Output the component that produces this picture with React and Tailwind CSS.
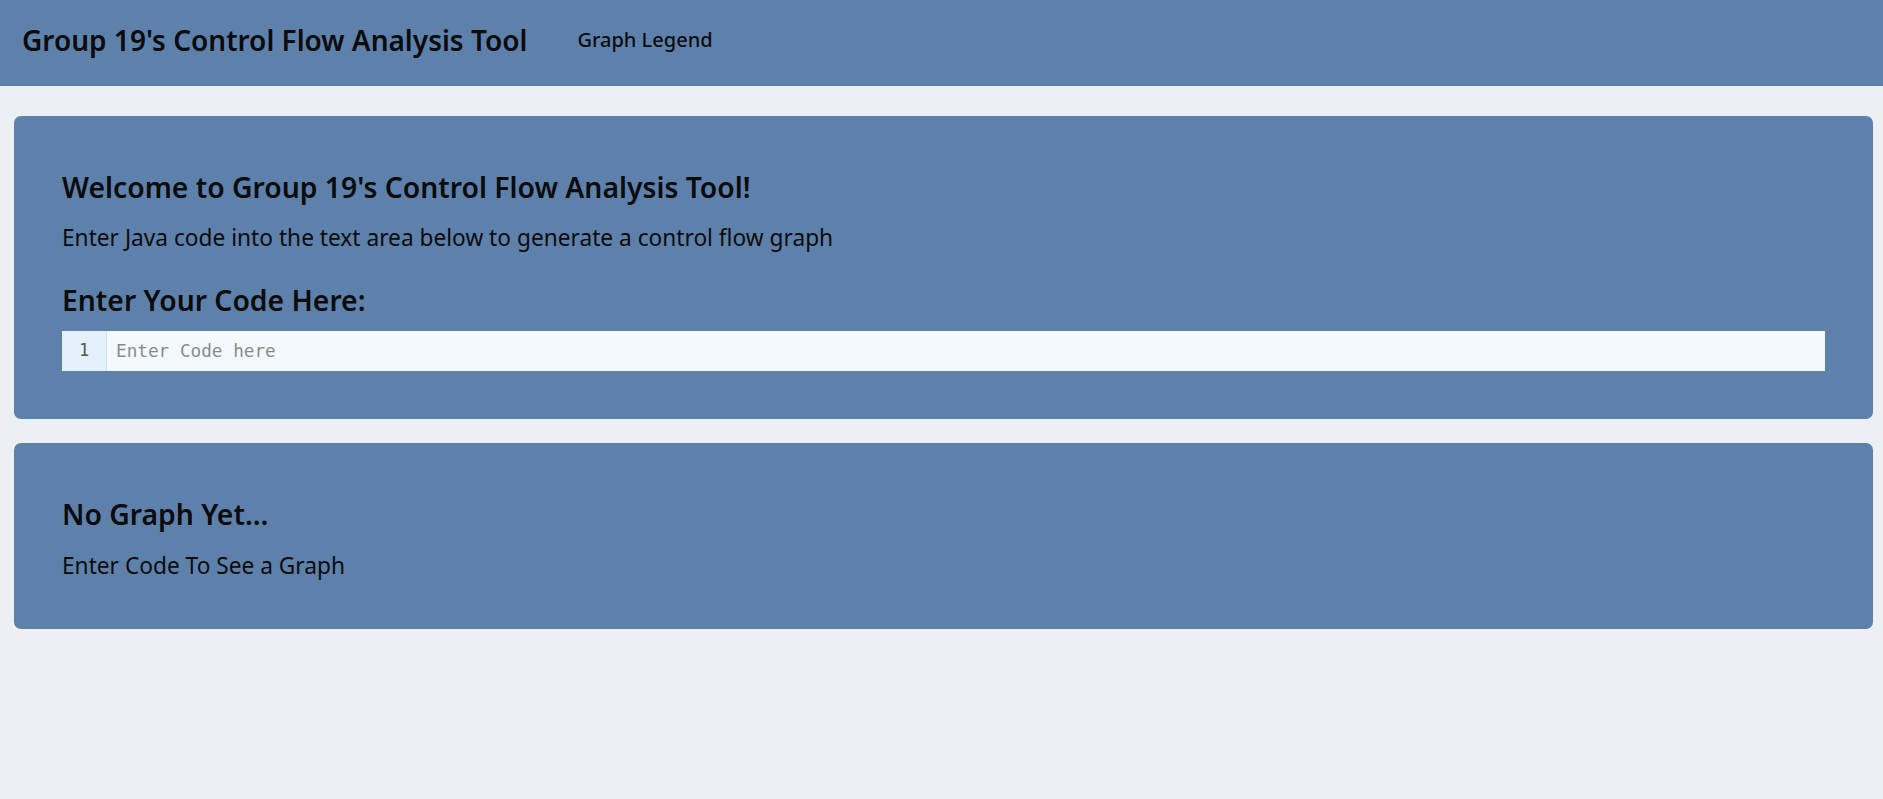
export default function App() {
  const font = { fontFamily: '"Noto Sans", "Open Sans", sans-serif' };
  const mono = { fontFamily: '"DejaVu Sans Mono", monospace' };
  return (
    <div className="min-h-[799px] bg-[#eceff4] text-[#0b0b0b]" style={font}>
      <header className="h-[86px] bg-[#5e81ac] flex items-center pl-[22px] pb-[7px]">
        <div className="text-[28px] font-semibold leading-none">Group 19's Control Flow Analysis Tool</div>
        <nav className="ml-[50px] text-[20px] font-medium leading-none">Graph Legend</nav>
      </header>
      <main className="pl-[14px] pr-[10px] pt-[30px] flex flex-col gap-[24px]">
        <section className="rounded-[7px] bg-[#5e81ac] px-[48px] pt-[54px] pb-[48px]">
          <h3 className="text-[28.3px] font-semibold leading-[34px]">Welcome to Group 19's Control Flow Analysis Tool!</h3>
          <p className="mt-[18px] text-[22.7px] leading-[32px]">Enter Java code into the text area below to generate a control flow graph</p>
          <h3 className="mt-[29px] text-[28.3px] font-semibold leading-[34px]">Enter Your Code Here:</h3>
          <div className="mt-[14px] h-[40px] flex bg-[#f4f9fe]">
            <div className="w-[45px] flex items-center justify-center bg-[#e4f0fb] border-r border-[#d6dde6] text-[17px] text-[#555]" style={mono}>1</div>
            <div className="flex items-center pl-[9px] text-[17.7px] text-[#8a8a8a]" style={mono}>Enter Code here</div>
          </div>
        </section>
        <section className="rounded-[7px] bg-[#5e81ac] px-[48px] pt-[54px] pb-[47px]">
          <h3 className="text-[28.3px] font-semibold leading-[34px]">No Graph Yet...</h3>
          <p className="mt-[19px] text-[22.7px] leading-[32px]">Enter Code To See a Graph</p>
        </section>
      </main>
    </div>
  );
}
